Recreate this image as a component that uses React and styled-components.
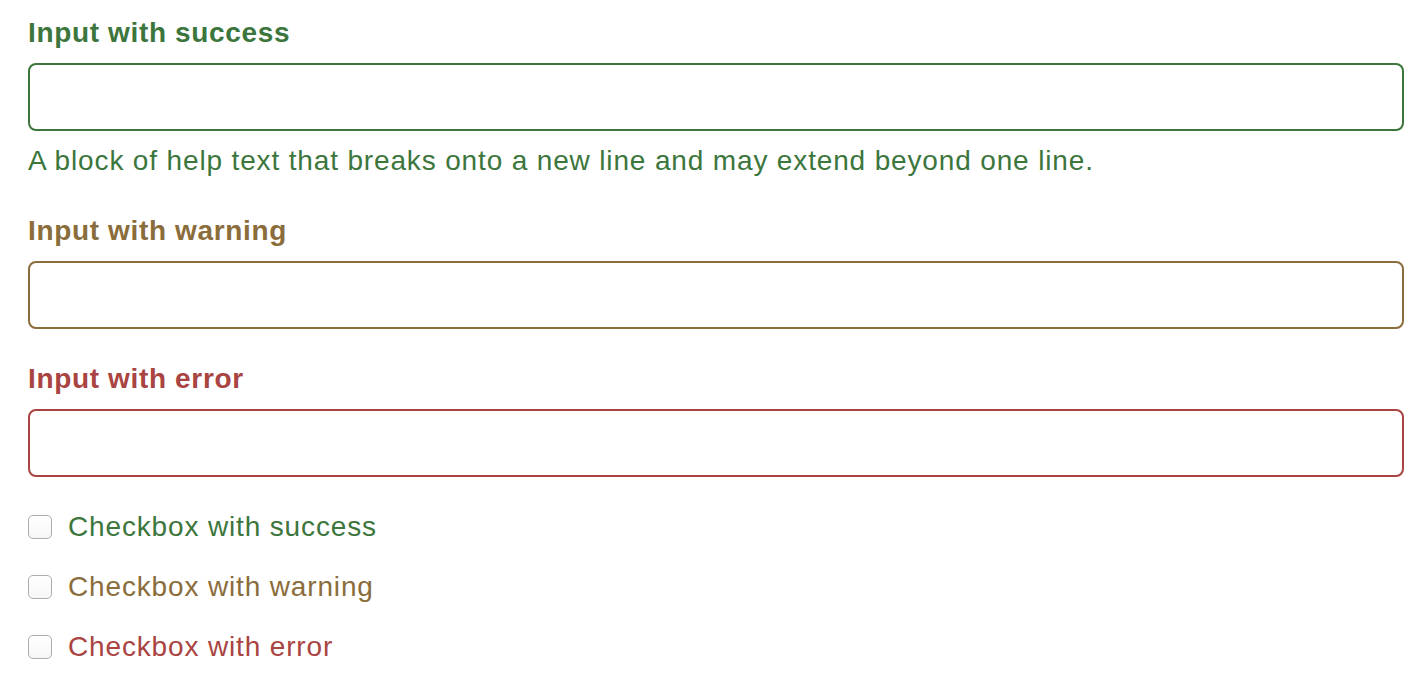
import React from "react";
import styled, { createGlobalStyle } from "styled-components";

const colors = {
    success: "#3c763d",
    warning: "#8a6d3b",
    error: "#a94442",
};

const GlobalStyle = createGlobalStyle`
    html, body {
        margin: 0;
        padding: 0;
        background: #fff;
    }
    body {
        font-family: "Liberation Sans", Arial, sans-serif;
        font-size: 28px;
        line-height: 40px;
        letter-spacing: 0.85px;
        color: #333;
    }
    * {
        box-sizing: border-box;
    }
`;

const Page = styled.div`
    padding: 13px 14px 0 28px;
`;

const FormGroup = styled.div`
    margin-bottom: 30px;
    color: ${(p) => colors[p.$state]};
`;

const Label = styled.label`
    display: block;
    font-weight: 700;
    letter-spacing: 0.65px;
    margin-bottom: 10px;
`;

const TextInput = styled.input`
    display: block;
    width: 100%;
    height: 68px;
    padding: 12px 24px;
    font: inherit;
    color: #555;
    background: #fff;
    border: 2px solid ${(p) => colors[p.$state]};
    border-radius: 8px;
    outline: none;
`;

const HelpBlock = styled.span`
    display: block;
    margin-top: 10px;
    margin-bottom: 20px;
`;

const CheckRow = styled.div`
    margin: 20px 0;
    color: ${(p) => colors[p.$state]};
`;

const CheckLabel = styled.label`
    display: flex;
    align-items: center;
    min-height: 40px;
    gap: 16px;
`;

const Box = styled.input`
    appearance: none;
    margin: 0;
    width: 24px;
    height: 24px;
    flex-shrink: 0;
    border: 1.5px solid #adadad;
    border-radius: 5px;
    background: linear-gradient(#ffffff, #f6f6f6);
`;

const fields = [
    { state: "success", label: "Input with success", help: "A block of help text that breaks onto a new line and may extend beyond one line." },
    { state: "warning", label: "Input with warning" },
    { state: "error", label: "Input with error" },
];

const checks = [
    { state: "success", label: "Checkbox with success" },
    { state: "warning", label: "Checkbox with warning" },
    { state: "error", label: "Checkbox with error" },
];

const App = () => {
    return (
        <Page>
            <GlobalStyle />
            {fields.map((f) => (
                <FormGroup key={f.state} $state={f.state}>
                    <Label htmlFor={`input-${f.state}`}>{f.label}</Label>
                    <TextInput id={`input-${f.state}`} type="text" $state={f.state} />
                    {f.help && <HelpBlock>{f.help}</HelpBlock>}
                </FormGroup>
            ))}
            {checks.map((c) => (
                <CheckRow key={c.state} $state={c.state}>
                    <CheckLabel>
                        <Box type="checkbox" />
                        {c.label}
                    </CheckLabel>
                </CheckRow>
            ))}
        </Page>
    );
};

export default App;
